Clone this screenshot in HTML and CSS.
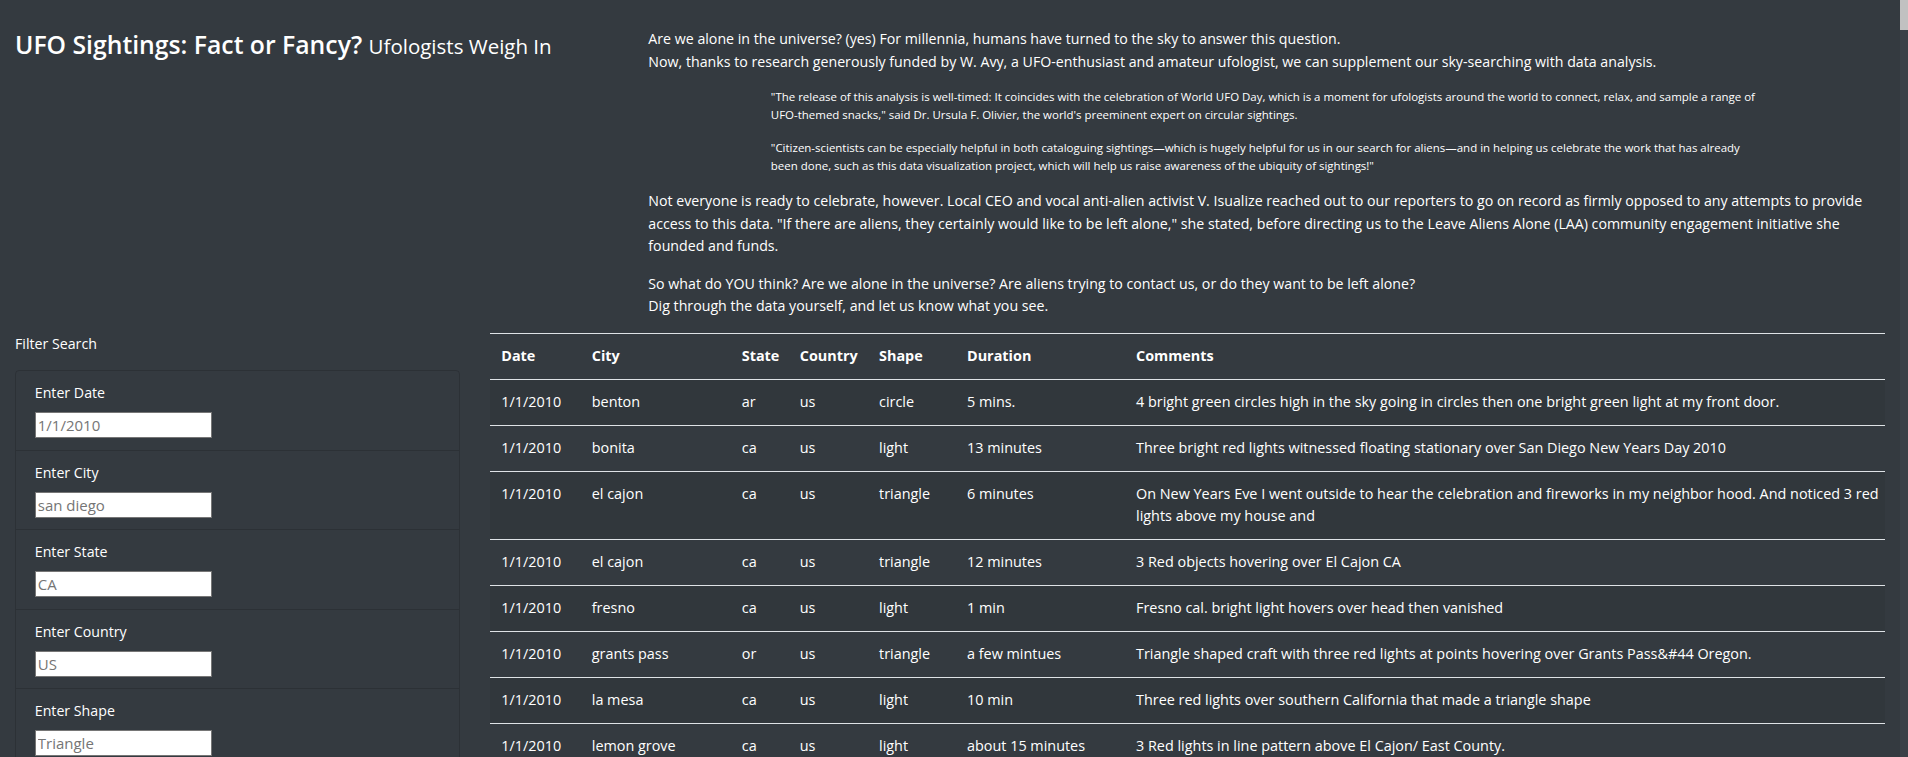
FILE: index.html
```html
<!DOCTYPE html>
<html lang="en">
<head>
<meta charset="utf-8">
<title>UFO Sightings: Fact or Fancy?</title>
<link rel="stylesheet" href="styles.css">
</head>
<body>
<div class="page">
  <div class="main">
    <header class="top">
      <div class="title-col">
        <h1 class="title">UFO Sightings: Fact or Fancy? <small>Ufologists Weigh In</small></h1>
      </div>
      <div class="intro-col">
        <p>Are we alone in the universe? (yes) For millennia, humans have turned to the sky to answer this question.<br>Now, thanks to research generously funded by W. Avy, a UFO-enthusiast and amateur ufologist, we can supplement our sky-searching with data analysis.</p>
        <blockquote class="quote">"The release of this analysis is well-timed: It coincides with the celebration of World UFO Day, which is a moment for ufologists around the world to connect, relax, and sample a range of UFO-themed snacks," said Dr. Ursula F. Olivier, the world's preeminent expert on circular sightings.</blockquote>
        <blockquote class="quote">"Citizen-scientists can be especially helpful in both cataloguing sightings—which is hugely helpful for us in our search for aliens—and in helping us celebrate the work that has already been done, such as this data visualization project, which will help us raise awareness of the ubiquity of sightings!"</blockquote>
        <p>Not everyone is ready to celebrate, however. Local CEO and vocal anti-alien activist V. Isualize reached out to our reporters to go on record as firmly opposed to any attempts to provide access to this data. "If there are aliens, they certainly would like to be left alone," she stated, before directing us to the Leave Aliens Alone (LAA) community engagement initiative she founded and funds.</p>
        <p>So what do YOU think? Are we alone in the universe? Are aliens trying to contact us, or do they want to be left alone?<br>Dig through the data yourself, and let us know what you see.</p>
      </div>
    </header>
    <section class="bottom">
      <aside class="filter-col">
        <div class="filter-title">Filter Search</div>
        <form class="card">
          <div class="item">
            <label for="datetime">Enter Date</label>
            <input id="datetime" type="text" placeholder="1/1/2010">
          </div>
          <div class="item">
            <label for="city">Enter City</label>
            <input id="city" type="text" placeholder="san diego">
          </div>
          <div class="item">
            <label for="state">Enter State</label>
            <input id="state" type="text" placeholder="CA">
          </div>
          <div class="item">
            <label for="country">Enter Country</label>
            <input id="country" type="text" placeholder="US">
          </div>
          <div class="item">
            <label for="shape">Enter Shape</label>
            <input id="shape" type="text" placeholder="Triangle">
          </div>
        </form>
      </aside>
      <div class="table-col">
        <table class="ufo-table">
          <colgroup>
            <col class="c-date"><col class="c-city"><col class="c-state"><col class="c-country"><col class="c-shape"><col class="c-duration"><col>
          </colgroup>
          <thead>
            <tr><th>Date</th><th>City</th><th>State</th><th>Country</th><th>Shape</th><th>Duration</th><th>Comments</th></tr>
          </thead>
          <tbody>
            <tr><td>1/1/2010</td><td>benton</td><td>ar</td><td>us</td><td>circle</td><td>5 mins.</td><td>4 bright green circles high in the sky going in circles then one bright green light at my front door.</td></tr>
            <tr><td>1/1/2010</td><td>bonita</td><td>ca</td><td>us</td><td>light</td><td>13 minutes</td><td>Three bright red lights witnessed floating stationary over San Diego New Years Day 2010</td></tr>
            <tr><td>1/1/2010</td><td>el cajon</td><td>ca</td><td>us</td><td>triangle</td><td>6 minutes</td><td>On New Years Eve I went outside to hear the celebration and fireworks in my neighbor hood. And noticed 3 red lights above my house and</td></tr>
            <tr><td>1/1/2010</td><td>el cajon</td><td>ca</td><td>us</td><td>triangle</td><td>12 minutes</td><td>3 Red objects hovering over El Cajon CA</td></tr>
            <tr><td>1/1/2010</td><td>fresno</td><td>ca</td><td>us</td><td>light</td><td>1 min</td><td>Fresno cal. bright light hovers over head then vanished</td></tr>
            <tr><td>1/1/2010</td><td>grants pass</td><td>or</td><td>us</td><td>triangle</td><td>a few mintues</td><td>Triangle shaped craft with three red lights at points hovering over Grants Pass&amp;#44 Oregon.</td></tr>
            <tr><td>1/1/2010</td><td>la mesa</td><td>ca</td><td>us</td><td>light</td><td>10 min</td><td>Three red lights over southern California that made a triangle shape</td></tr>
            <tr><td>1/1/2010</td><td>lemon grove</td><td>ca</td><td>us</td><td>light</td><td>about 15 minutes</td><td>3 Red lights in line pattern above El Cajon/ East County.</td></tr>
            <tr><td>1/1/2010</td><td>san diego</td><td>ca</td><td>us</td><td>light</td><td>3 minutes</td><td>Bright orange light moving slowly across the sky</td></tr>
          </tbody>
        </table>
      </div>
    </section>
  </div>
  <div class="scrollbar"><div class="thumb"></div></div>
</div>
</body>
</html>
```

FILE: styles.css
```css
html {
  overflow: hidden;
}

body {
  margin: 0;
  background: #343a40;
  color: #ffffff;
  font-family: "Open Sans", "Liberation Sans", sans-serif;
  font-size: 14.2px;
  line-height: 22.5px;
}

.page {
  display: flex;
  align-items: flex-start;
}

.main {
  width: 1900px;
  flex: none;
}

.scrollbar {
  width: 8px;
  height: 757px;
  flex: none;
  background: #3b4047;
}

.thumb {
  height: 30px;
  background: #c1c1c1;
}

/* header */
.top {
  display: grid;
  grid-template-columns: 633.33px 1fr;
  padding-top: 28px;
}

.title-col,
.intro-col,
.filter-col,
.table-col {
  padding: 0 15px;
}

.title {
  margin: 3px 0 0;
  font-size: 24.75px;
  font-weight: 600;
  line-height: 27px;
  white-space: nowrap;
}

.title small {
  font-size: 20.5px;
  font-weight: 400;
}

.intro-col p {
  margin: 0 0 15px;
}

.quote {
  margin: 0 0 15px;
  padding: 0 122.5px;
  font-size: 11.47px;
  line-height: 18px;
}

/* lower section */
.bottom {
  display: grid;
  grid-template-columns: 475px 1fr;
}

.filter-title {
  margin-bottom: 15px;
}

.card {
  margin: 0;
  border: 1px solid rgba(0, 0, 0, 0.15);
  border-radius: 4px;
}

.item {
  padding: 11.25px 18.75px;
  border-bottom: 1px solid rgba(0, 0, 0, 0.15);
}

.item label {
  display: block;
  margin-bottom: 7.5px;
}

.item input {
  display: block;
  box-sizing: border-box;
  width: 177px;
  height: 26px;
  margin: 0;
  padding: 1px 2px;
  border: 1px solid #767676;
  background: #ffffff;
  color: #333333;
  font-family: "Open Sans", "Liberation Sans", sans-serif;
  font-size: 15px;
}

.item input::placeholder {
  color: #757575;
}

/* table */
.ufo-table {
  width: 100%;
  border-collapse: collapse;
  table-layout: fixed;
  border-top: 1px solid #dee2e6;
  font-size: 14.4px;
}

.c-date { width: 90.5px; }
.c-city { width: 150px; }
.c-state { width: 58px; }
.c-country { width: 79.25px; }
.c-shape { width: 88px; }
.c-duration { width: 169px; }

.ufo-table th,
.ufo-table td {
  padding: 11.25px;
  text-align: left;
  vertical-align: top;
  border-bottom: 1px solid #dee2e6;
}

.ufo-table th:last-child,
.ufo-table td:last-child {
  padding-right: 2px;
}

.ufo-table th {
  font-weight: 700;
}

.ufo-table tbody tr:nth-child(odd) {
  background: rgba(0, 0, 0, 0.05);
}
```
